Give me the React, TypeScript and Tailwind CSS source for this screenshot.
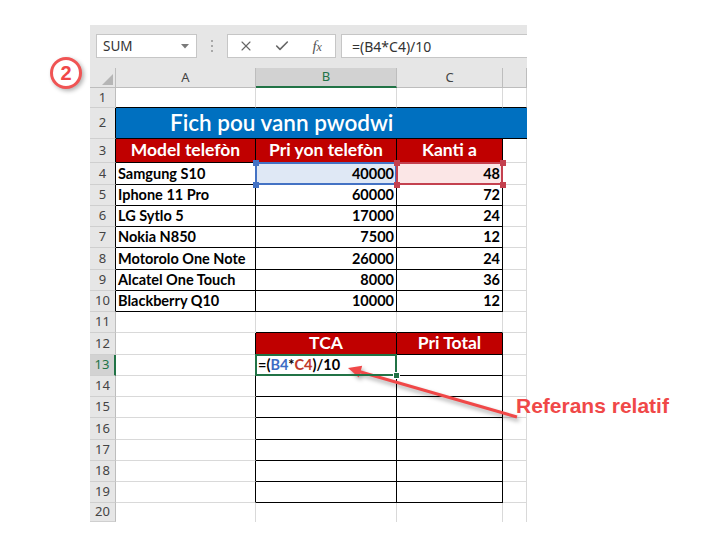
import React from "react";
import clsx from "clsx";
import { X, Check } from "lucide-react";

const products = [
  ["Samgung S10", "40000", "48"],
  ["Iphone 11 Pro", "60000", "72"],
  ["LG Sytlo 5", "17000", "24"],
  ["Nokia N850", "7500", "12"],
  ["Motorolo One Note", "26000", "24"],
  ["Alcatel One Touch", "8000", "36"],
  ["Blackberry Q10", "10000", "12"],
];

interface CellProps {
  w: string;
  r?: boolean;
  b?: boolean;
  className?: string;
  children?: React.ReactNode;
}

function Cell({ w, r, b, className, children }: CellProps) {
  return (
    <div
      className={clsx(
        "relative flex h-full shrink-0 items-center border-r border-b",
        r ? "border-r-black" : "border-r-[#d9d9d9]",
        b ? "border-b-black" : "border-b-[#d9d9d9]",
        w,
        className
      )}
    >
      {children}
    </div>
  );
}

function RowHead({ n, dark }: { n: number; dark?: boolean }) {
  const active = n === 13;
  return (
    <div
      className={clsx(
        "flex h-full w-[26px] shrink-0 items-center justify-center border-b border-b-[#cfcfcf] text-[13px]",
        active
          ? "border-r-2 border-r-[#217346] bg-[#d2d2d2] text-[#217346]"
          : "border-r bg-[#e6e6e6] text-[#444]",
        !active && (dark ? "border-r-black" : "border-r-[#bdbdbd]")
      )}
    >
      {n}
    </div>
  );
}

function rowHeight(n: number) {
  if (n === 1) return "h-[20px]";
  if (n === 2) return "h-[31px]";
  if (n === 3) return "h-[24px]";
  if (n === 20) return "h-[19px]";
  if (n === 4 || n === 8 || n === 12 || n === 16) return "h-[22px]";
  return "h-[21px]";
}

function Handle({ pos, color }: { pos: string; color: string }) {
  return <div className={clsx("absolute z-20 h-[6px] w-[6px]", pos, color)} />;
}

function SheetRow({ n }: { n: number }) {
  const A = "w-[140px]";
  const B = "w-[141px]";
  const C = "w-[106px]";
  const D = "flex-1";
  const bold = "font-['Lato',sans-serif] font-bold text-[14.5px] text-black";
  const head = "justify-center bg-[#c00000] font-['Lato',sans-serif] font-bold text-[17.5px] text-white";

  let cells: React.ReactNode;

  if (n === 1) {
    cells = (
      <>
        <Cell w={A} b />
        <Cell w={B} b />
        <Cell w={C} b />
        <Cell w={D} b />
      </>
    );
  } else if (n === 2) {
    cells = (
      <div className="flex h-full flex-1 items-center border-b border-b-black bg-[#0070c0] pl-[54px] font-['Lato',sans-serif] text-[22.5px] font-semibold text-white">
        Fich pou vann pwodwi
      </div>
    );
  } else if (n === 3) {
    cells = (
      <>
        <Cell w={A} r b className={head}>Model telefòn</Cell>
        <Cell w={B} r b className={head}>Pri yon telefòn</Cell>
        <Cell w={C} r b className={head}>Kanti a</Cell>
        <Cell w={D} />
      </>
    );
  } else if (n >= 4 && n <= 10) {
    const [name, price, qty] = products[n - 4];
    cells = (
      <>
        <Cell w={A} r b className={clsx(bold, "pl-[2px]")}>{name}</Cell>
        <Cell w={B} r b className={clsx(bold, "justify-end pr-[2px]", n === 4 && "bg-[#dfe8f5]")}>
          {n === 4 && (
            <>
              <div className="absolute -inset-px z-10 border-2 border-[#4472c4]" />
              <Handle pos="-left-[3px] -top-[3px]" color="bg-[#4472c4]" />
              <Handle pos="-left-[3px] -bottom-[4px]" color="bg-[#4472c4]" />
            </>
          )}
          {price}
        </Cell>
        <Cell w={C} r b className={clsx(bold, "justify-end pr-[2px]", n === 4 && "bg-[#fbe6e6]")}>
          {n === 4 && (
            <>
              <div className="absolute -inset-px z-10 border-2 border-[#c4414f]" />
              <Handle pos="-left-[3px] -top-[3px]" color="bg-[#c4414f]" />
              <Handle pos="-left-[3px] -bottom-[4px]" color="bg-[#c4414f]" />
              <Handle pos="-right-[4px] -top-[3px]" color="bg-[#c4414f]" />
              <Handle pos="-right-[4px] -bottom-[4px]" color="bg-[#c4414f]" />
            </>
          )}
          {qty}
        </Cell>
        <Cell w={D} />
      </>
    );
  } else if (n === 11) {
    cells = (
      <>
        <Cell w={A} />
        <Cell w={B} b />
        <Cell w={C} b />
        <Cell w={D} />
      </>
    );
  } else if (n === 12) {
    cells = (
      <>
        <Cell w={A} r />
        <Cell w={B} r b className={head}>TCA</Cell>
        <Cell w={C} r b className={head}>Pri Total</Cell>
        <Cell w={D} />
      </>
    );
  } else if (n >= 13 && n <= 19) {
    cells = (
      <>
        <Cell w={A} r />
        <Cell w={B} r b className={clsx(bold, "pl-[2px]")}>
          {n === 13 && (
            <>
              <div className="absolute -inset-px z-10 border-2 border-[#217346]" />
              <div className="absolute -right-[4px] -bottom-[4px] z-20 h-[7px] w-[7px] border border-white bg-[#217346]" />
              <span>
                =(<span className="text-[#3d6cc4]">B4</span>*
                <span className="text-[#c0392b]">C4</span>)/10
              </span>
            </>
          )}
        </Cell>
        <Cell w={C} r b />
        <Cell w={D} />
      </>
    );
  } else {
    cells = (
      <>
        <Cell w={A} className="border-b-0" />
        <Cell w={B} className="border-b-0" />
        <Cell w={C} className="border-b-0" />
        <Cell w={D} className="border-b-0" />
      </>
    );
  }

  return (
    <div className={clsx("flex", rowHeight(n))}>
      <RowHead n={n} dark={n >= 2 && n <= 10} />
      {cells}
    </div>
  );
}

function Toolbar() {
  return (
    <div className="flex h-[43px] items-start bg-[#e6e6e6] pt-[9px] font-['Noto_Sans',sans-serif] text-[#333]">
      <div className="ml-[6px] flex h-[24px] w-[101px] items-center justify-between border border-[#c6c6c6] bg-white pl-[6px] pr-[7px] text-[13.5px]">
        <span>SUM</span>
        <svg width="8" height="5" viewBox="0 0 8 5">
          <path d="M0 0 L8 0 L4 4.5 Z" fill="#7a7a7a" />
        </svg>
      </div>
      <div className="flex h-[24px] w-[30px] flex-col items-center justify-center gap-[3px]">
        <span className="h-[2px] w-[2px] bg-[#a8a8a8]" />
        <span className="h-[2px] w-[2px] bg-[#a8a8a8]" />
        <span className="h-[2px] w-[2px] bg-[#a8a8a8]" />
      </div>
      <div className="flex h-[24px] w-[109px] items-center border border-[#c6c6c6] bg-white">
        <span className="flex w-[36px] justify-center">
          <X size={16} strokeWidth={1.7} color="#666" />
        </span>
        <span className="flex w-[36px] justify-center">
          <Check size={16} strokeWidth={2.4} color="#666" />
        </span>
        <span className="flex w-[36px] items-baseline justify-center font-['Liberation_Serif',serif] text-[15px] italic text-[#555]">
          f<span className="text-[12px]">x</span>
        </span>
      </div>
      <div className="ml-[5px] flex h-[24px] flex-1 items-center border border-r-0 border-[#c6c6c6] bg-white pl-[10px] text-[14px]">
        =(B4*C4)/10
      </div>
    </div>
  );
}

function ColumnHeaders() {
  const base =
    "flex h-full shrink-0 items-center justify-center border-r border-b border-r-[#bdbdbd] border-b-[#bdbdbd] bg-[#e6e6e6] text-[13px] text-[#444]";
  return (
    <div className="flex h-[20px] font-['Noto_Sans',sans-serif]">
      <div className={clsx(base, "relative w-[26px]")}>
        <svg className="absolute right-[2px] bottom-[2px]" width="11" height="11" viewBox="0 0 11 11">
          <path d="M11 0 L11 11 L0 11 Z" fill="#b5b5b5" />
        </svg>
      </div>
      <div className={clsx(base, "w-[140px]")}>A</div>
      <div className="flex h-full w-[141px] shrink-0 items-center justify-center border-r border-r-[#bdbdbd] border-b-2 border-b-[#217346] bg-[#d2d2d2] text-[13px] text-[#217346]">
        B
      </div>
      <div className={clsx(base, "w-[106px]")}>C</div>
      <div className={clsx(base, "flex-1")} />
    </div>
  );
}

export default function App() {
  const rows = Array.from({ length: 20 }, (_, i) => i + 1);

  return (
    <div className="relative h-[559px] w-[726px] overflow-hidden bg-white">
      <div className="pl-[90px] pt-[25px]">
        <div className="h-[497px] w-[437px] overflow-hidden">
          <Toolbar />
          <ColumnHeaders />
          {rows.map((n) => (
            <SheetRow key={n} n={n} />
          ))}
        </div>
      </div>

      {/* step marker */}
      <div className="absolute left-[50px] top-[57px] flex h-[32px] w-[32px] items-center justify-center rounded-full border-[3px] border-[#f05454] bg-white font-['Liberation_Sans',sans-serif] text-[20px] font-bold text-[#f04848] shadow-[2px_2px_4px_rgba(0,0,0,0.3)]">
        2
      </div>

      {/* arrow */}
      <svg
        className="pointer-events-none absolute left-0 top-0 drop-shadow-[2px_3px_2px_rgba(0,0,0,0.35)]"
        width="726"
        height="559"
        viewBox="0 0 726 559"
      >
        <line x1="517" y1="417" x2="359" y2="371.5" stroke="#f04848" strokeWidth="3" />
        <polygon points="348,368 362.2,365.8 358.8,377.4" fill="#f04848" />
      </svg>

      <div className="absolute left-[516px] top-[395px] font-['Liberation_Sans',sans-serif] text-[21px] font-bold leading-none text-[#f04848]">
        Referans relatif
      </div>
    </div>
  );
}
